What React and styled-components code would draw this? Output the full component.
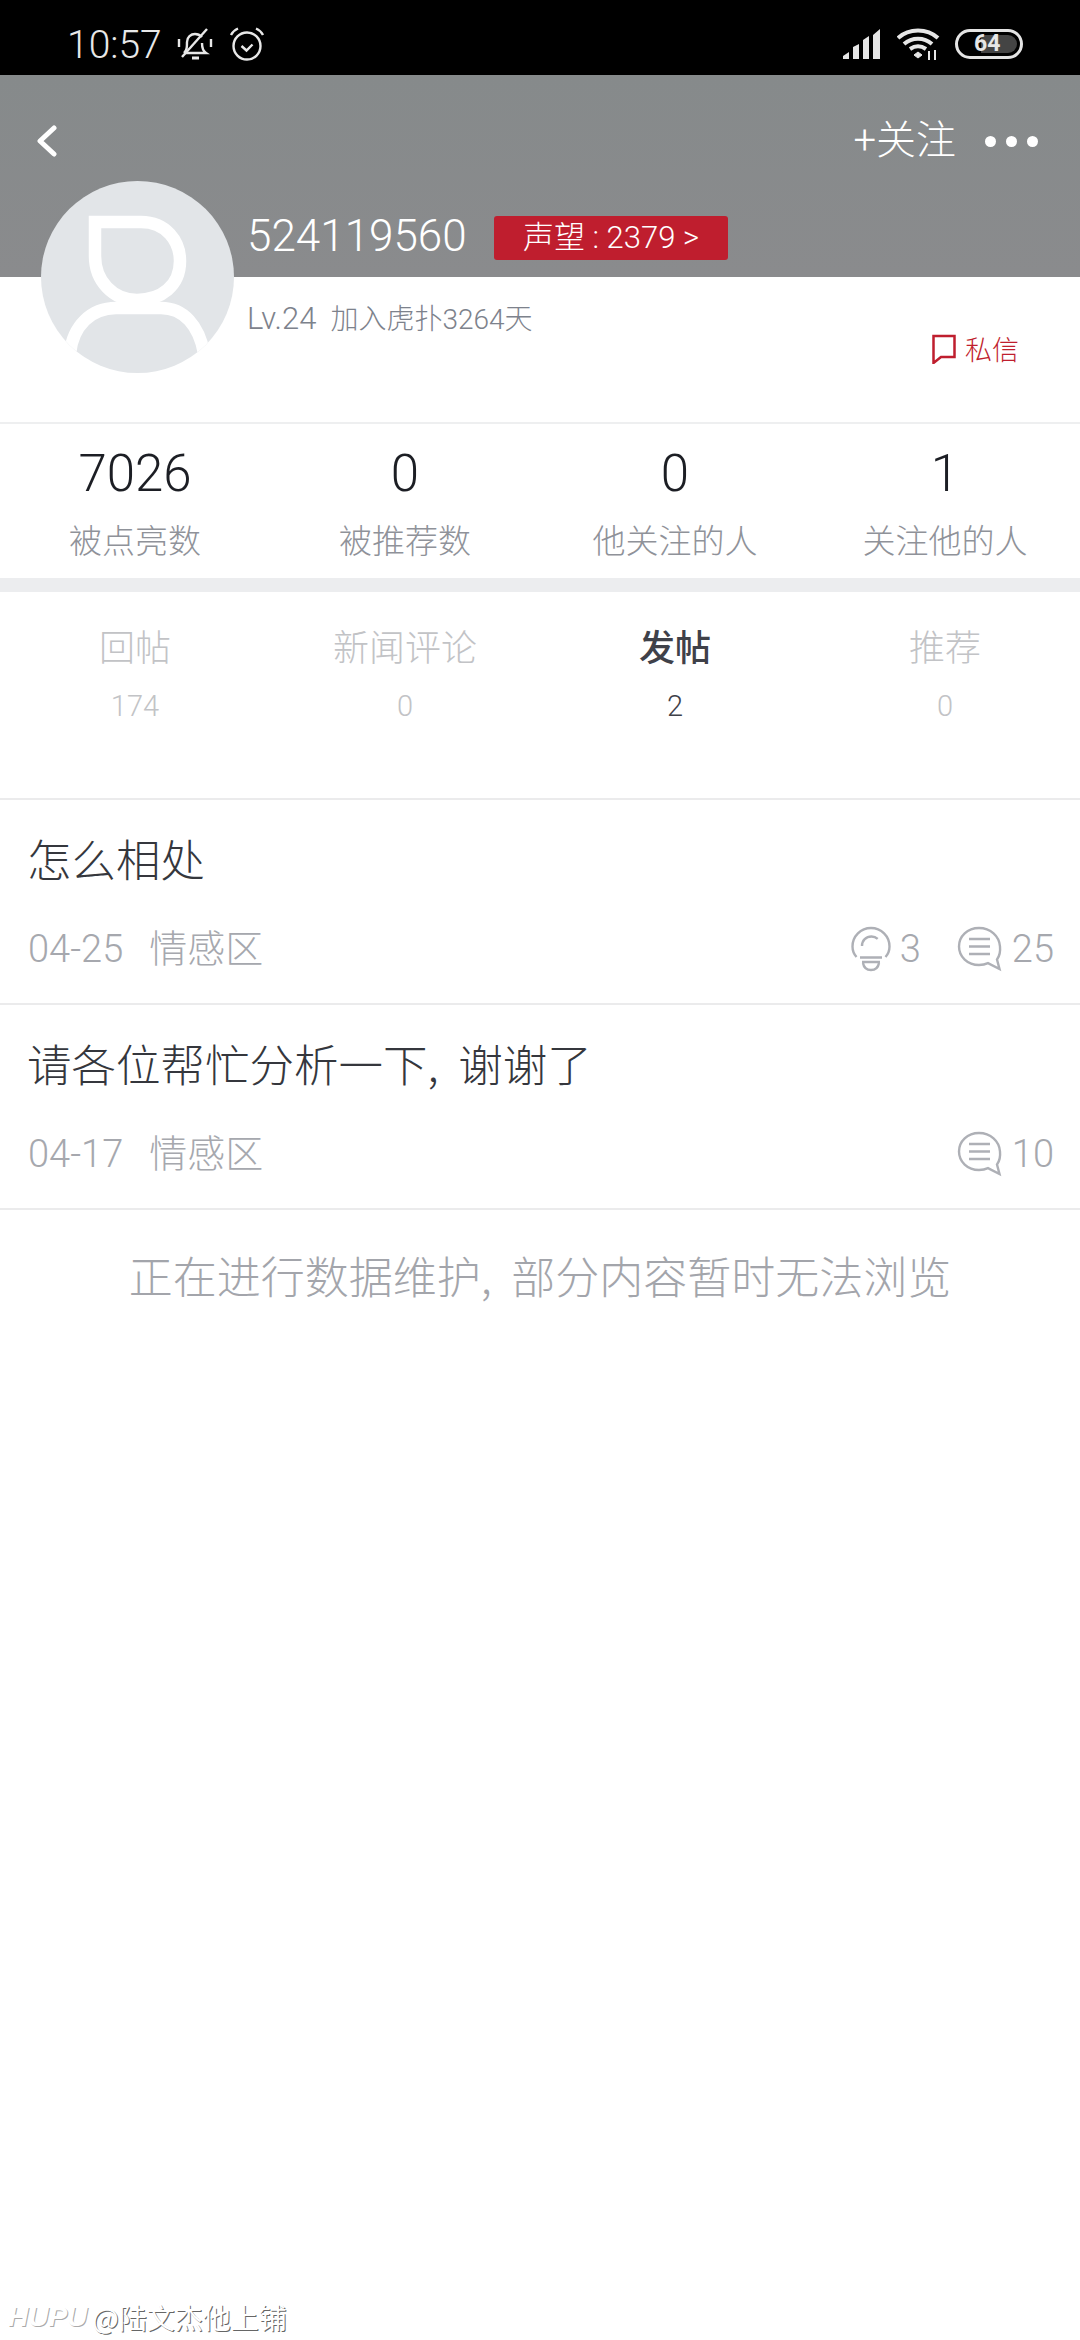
import React from "react";
import styled, { createGlobalStyle } from "styled-components";

const CN = '"Noto Sans CJK SC", sans-serif';
const NUM = 'Roboto, "Noto Sans CJK SC", sans-serif';

const Global = createGlobalStyle`
  html, body { margin: 0; padding: 0; background: #fff; }
  body { width: 1080px; height: 2340px; overflow: hidden; font-family: ${NUM}; }
  * { box-sizing: border-box; }
`;

const Page = styled.div`
  position: relative;
  width: 1080px;
  height: 2340px;
  background: #fff;
  overflow: hidden;
`;

const StatusBar = styled.div`
  height: 75px;
  background: #000;
  display: flex;
  align-items: center;
  padding: 0 57px 0 67px;
  color: #e8e8e8;
`;
const Time = styled.span`
  font: 300 39px/1 Roboto, sans-serif;
  width: 108px;
  margin-top: 16px;
`;
const StatusIcons = styled.div`
  display: flex;
  align-items: center;
  gap: 16px;
  margin-left: 2px;
  margin-top: 13px;
`;
const StatusRight = styled.div`
  margin-left: auto;
  display: flex;
  align-items: center;
  gap: 14px;
  margin-top: 13px;
`;
const Battery = styled.div`
  position: relative;
  width: 68px;
  height: 30px;
  border: 3px solid #e4e4e4;
  border-radius: 15px;
  padding: 3px;
  display: flex;
`;
const BatteryFill = styled.div`
  width: 66%;
  margin-left: 20px;
  background: #444;
  border-radius: 0 9px 9px 0;
`;
const BatteryText = styled.span`
  position: absolute;
  left: 16px;
  top: -3px;
  font: 700 23px/30px Roboto, sans-serif;
  color: #e6e6e6;
`;

const Hero = styled.div`
  height: 349px;
  background: linear-gradient(to bottom, #868a8b 0, #8a8b8d 202px, #fff 202px);
  border-bottom: 2px solid #eeeff0;
`;
const Nav = styled.div`
  height: 106px;
  padding: 26px 42px 0 36px;
  display: flex;
  align-items: center;
  color: #fff;
`;
const Follow = styled.span`
  margin-left: auto;
  font: 300 40px/1 ${NUM};
  color: #fff;
`;
const Dots = styled.div`
  display: flex;
  gap: 10px;
  margin-left: 29px;
`;
const Dot = styled.i`
  width: 11px;
  height: 11px;
  border-radius: 50%;
  background: #fff;
`;

const Profile = styled.div`
  display: flex;
  padding-left: 41px;
`;
const Avatar = styled.div`
  width: 193px;
  height: 192px;
  flex: none;
  border-radius: 50%;
  background: #e2e5e8;
  overflow: hidden;
`;
const Info = styled.div`
  flex: 1;
  padding: 26px 0 0 13px;
`;
const NameRow = styled.div`
  display: flex;
  align-items: center;
  height: 58px;
`;
const Name = styled.span`
  font: 300 44px/1 Roboto, sans-serif;
  color: #fff;
  width: 214px;
`;
const Rep = styled.span`
  margin: 4px 0 0 33px;
  width: 234px;
  height: 44px;
  border-radius: 3px;
  background: #bf1e2e;
  color: #fff;
  font: 300 31px/44px ${NUM};
  text-align: center;
  white-space: nowrap;
`;
const Meta = styled.div`
  margin-top: 42px;
  display: flex;
  align-items: baseline;
  gap: 14px;
  font: 300 28px/24px ${NUM};
  color: #7d828c;
`;
const Level = styled.span`
  font-size: 31px;
`;
const MessageLink = styled.div`
  display: flex;
  align-items: center;
  justify-content: flex-end;
  gap: 9px;
  margin: 2px 61px 0 0;
  font: 300 27px/24px ${CN};
  color: #bf1e2e;
`;

const Grid = styled.div`
  display: grid;
  grid-template-columns: repeat(4, 270px);
`;
const Stat = styled.div`
  height: 154px;
  padding-top: 25px;
  text-align: center;
`;
const StatNum = styled.div`
  font: 300 51px/50px Roboto, sans-serif;
  color: #1c1e24;
`;
const StatLabel = styled.div`
  margin-top: 19px;
  font: 300 33px/42px ${CN};
  color: #8f9299;
`;
const Band = styled.div`
  height: 14px;
  background: #ecedef;
`;
const Tabs = styled(Grid)`
  height: 208px;
  border-bottom: 2px solid #ebebec;
`;
const Tab = styled.div`
  padding-top: 30px;
  text-align: center;
  color: ${p => (p.$active ? "#3f4149" : "#c2c3c6")};
`;
const TabTitle = styled.div`
  font: ${p => (p.$active ? 500 : 300)} 36px/46px ${CN};
`;
const TabCount = styled.div`
  margin-top: 24px;
  font: 300 29px/28px Roboto, sans-serif;
`;
const Post = styled.div`
  height: 205px;
  border-bottom: 2px solid #ebebec;
  padding: 29px 26px 0 28px;
`;
const Title = styled.div`
  font: 300 44.500px/58px ${CN};
  color: #35373d;
  white-space: pre;
  margin-left: -1px;
`;
const PostMeta = styled.div`
  margin-top: 39px;
  display: flex;
  align-items: center;
  height: 46px;
  font: 300 38px/46px ${NUM};
  color: #a6a8ae;
`;
const Section = styled.span`
  margin-left: 26px;
`;
const Counter = styled.span`
  display: flex;
  align-items: center;
  gap: 9px;
  margin-left: ${p => (p.$first ? "auto" : "36px")};
  font: 300 38px/46px Roboto, sans-serif;
`;
const Spacer = styled.span`
  margin-left: auto;
`;
const Notice = styled.div`
  margin-top: 36px;
  text-align: center;
  font: 300 44px/58px ${CN};
  color: #a3a5ab;
  white-space: pre;
`;
const Watermark = styled.div`
  position: absolute;
  left: 8px;
  bottom: 5px;
  display: flex;
  align-items: center;
  gap: 5px;
  color: #fff;
  font: 400 28px/36px ${CN};
  text-shadow: 1px 1px 0 #666;
`;
const Hupu = styled.span`
  font: italic 700 28px/36px "Liberation Sans", sans-serif;
  color: #fff;
  text-shadow: 1px 1px 0 #aaa;
`;

const Bulb = () => (
  <svg width="40" height="46" viewBox="0 0 40 46" fill="none" stroke="#aeb0b6" strokeWidth="2.4">
    <path d="M5.500 31C2.800 28 1.500 24.500 1.500 20.500 1.500 10 9.800 2 20 2s18.500 8 18.500 18.500c0 4-1.300 7.500-4 10.500" />
    <path d="M11 20c0-5.500 4-9.500 9.500-9.500 2.500 0 4.500.8 6.200 2.300" />
    <path d="M9 31.500h22M11 36h18" />
    <path d="M12 37c.8 4.500 4 7 8 7s7.200-2.500 8-7" />
  </svg>
);
const Comment = () => (
  <svg width="46" height="46" viewBox="0 0 46 46" fill="none" stroke="#aeb0b6" strokeWidth="2.4">
    <path d="M22 2C10.500 2 2 10.300 2 20.500S10.500 39 22 39c3.500 0 6.500-.7 9-1.900L42.500 43 40 33.500c2.500-3.400 3.500-8 3-13C42.300 10 33.500 2 22 2z" />
    <path d="M12 13h21M12 20.500h21M12 28h21" />
  </svg>
);

const stats = [["7026", "被点亮数"], ["0", "被推荐数"], ["0", "他关注的人"], ["1", "关注他的人"]];
const tabs = [["回帖", "174"], ["新闻评论", "0"], ["发帖", "2", true], ["推荐", "0"]];

export default function App() {
  return (
    <Page>
      <Global />
      <StatusBar>
        <Time>10:57</Time>
        <StatusIcons>
          <svg width="36" height="36" viewBox="0 0 36 36" fill="none" stroke="#e8e8e8" strokeWidth="2.400">
            <path d="M7 27c3-3 3-6 3-11 0-5 4-8 8-8 3 0 5 1 7 3M25 17c0 5 1 8 4 10H7" />
            <path d="M30 3 5 31" />
            <path d="M15 32h7" strokeWidth="3" />
            <path d="M2 13v8M34 13v8" />
          </svg>
          <svg width="36" height="36" viewBox="0 0 36 36" fill="none" stroke="#e8e8e8" strokeWidth="2.400">
            <circle cx="18" cy="20" r="13.500" />
            <path d="M12.500 20l5 4.500 6-6" />
            <path d="M2 9c1.500-3 3.500-5 7-6.500M34 9c-1.500-3-3.500-5-7-6.500" />
          </svg>
        </StatusIcons>
        <StatusRight>
          <svg width="40" height="30" viewBox="0 0 40 30" fill="#e6e6e6">
            <path d="M0 30v-3l6-4v7zM10 30V18l6-3v15zM20 30V11l6-4v23zM30 30V6l7-6v30z" />
          </svg>
          <svg width="44" height="34" viewBox="0 0 44 34" fill="none" stroke="#e6e6e6" strokeWidth="4">
            <path d="M1 11c11-10 29-10 40 0M7 17c8-7 20-7 28 0M13 22c5-3.500 11-3.500 16 0" />
            <path d="M17 28l4-3 4 3-4 3z" fill="#e6e6e6" strokeWidth="1" />
            <path d="M32 24v9M38 23v10" strokeWidth="2" />
          </svg>
          <Battery>
            <BatteryFill />
            <BatteryText>64</BatteryText>
          </Battery>
        </StatusRight>
      </StatusBar>

      <Hero>
        <Nav>
          <svg width="22" height="32" viewBox="0 0 22 32" fill="none" stroke="#fff" strokeWidth="5" strokeLinecap="round" strokeLinejoin="round">
            <path d="M18 3 4 16l14 13" />
          </svg>
          <Follow>+关注</Follow>
          <Dots><Dot /><Dot /><Dot /></Dots>
        </Nav>
        <Profile>
          <Avatar>
            <svg width="193" height="192" viewBox="0 0 193 192" fill="none" stroke="#fff" strokeWidth="12.500">
              <path d="M54 41h46c25 0 39 19 39 39 0 25-19 39-43 39-24 0-42-19-42-44z" />
              <path d="M29 172c3-27 21-45 46-45h45c23 0 38 18 43 45" />
            </svg>
          </Avatar>
          <Info>
            <NameRow>
              <Name>524119560</Name>
              <Rep>声望 : 2379 &gt;</Rep>
            </NameRow>
            <Meta>
              <Level>Lv.24</Level>
              <span>加入虎扑3264天</span>
            </Meta>
            <MessageLink>
              <svg width="24" height="30" viewBox="0 0 24 30" fill="none" stroke="#bf1e2e" strokeWidth="2.500">
                <path d="M1.500 2h21v21H9l-7.500 6z" />
              </svg>
              私信
            </MessageLink>
          </Info>
        </Profile>
      </Hero>

      <Grid>
        {stats.map(([n, l]) => (
          <Stat key={l}>
            <StatNum>{n}</StatNum>
            <StatLabel>{l}</StatLabel>
          </Stat>
        ))}
      </Grid>
      <Band />
      <Tabs>
        {tabs.map(([t, c, a]) => (
          <Tab key={t} $active={a}>
            <TabTitle $active={a}>{t}</TabTitle>
            <TabCount>{c}</TabCount>
          </Tab>
        ))}
      </Tabs>

      <Post>
        <Title>怎么相处</Title>
        <PostMeta>
          04-25<Section>情感区</Section>
          <Counter $first><Bulb />3</Counter>
          <Counter><Comment />25</Counter>
        </PostMeta>
      </Post>
      <Post>
        <Title>请各位帮忙分析一下,  谢谢了</Title>
        <PostMeta>
          04-17<Section>情感区</Section>
          <Spacer />
          <Counter><Comment />10</Counter>
        </PostMeta>
      </Post>
      <Notice>正在进行数据维护,  部分内容暂时无法浏览</Notice>

      <Watermark>
        <Hupu>HUPU</Hupu>
        <span>@陆文杰他上铺</span>
      </Watermark>
    </Page>
  );
}
